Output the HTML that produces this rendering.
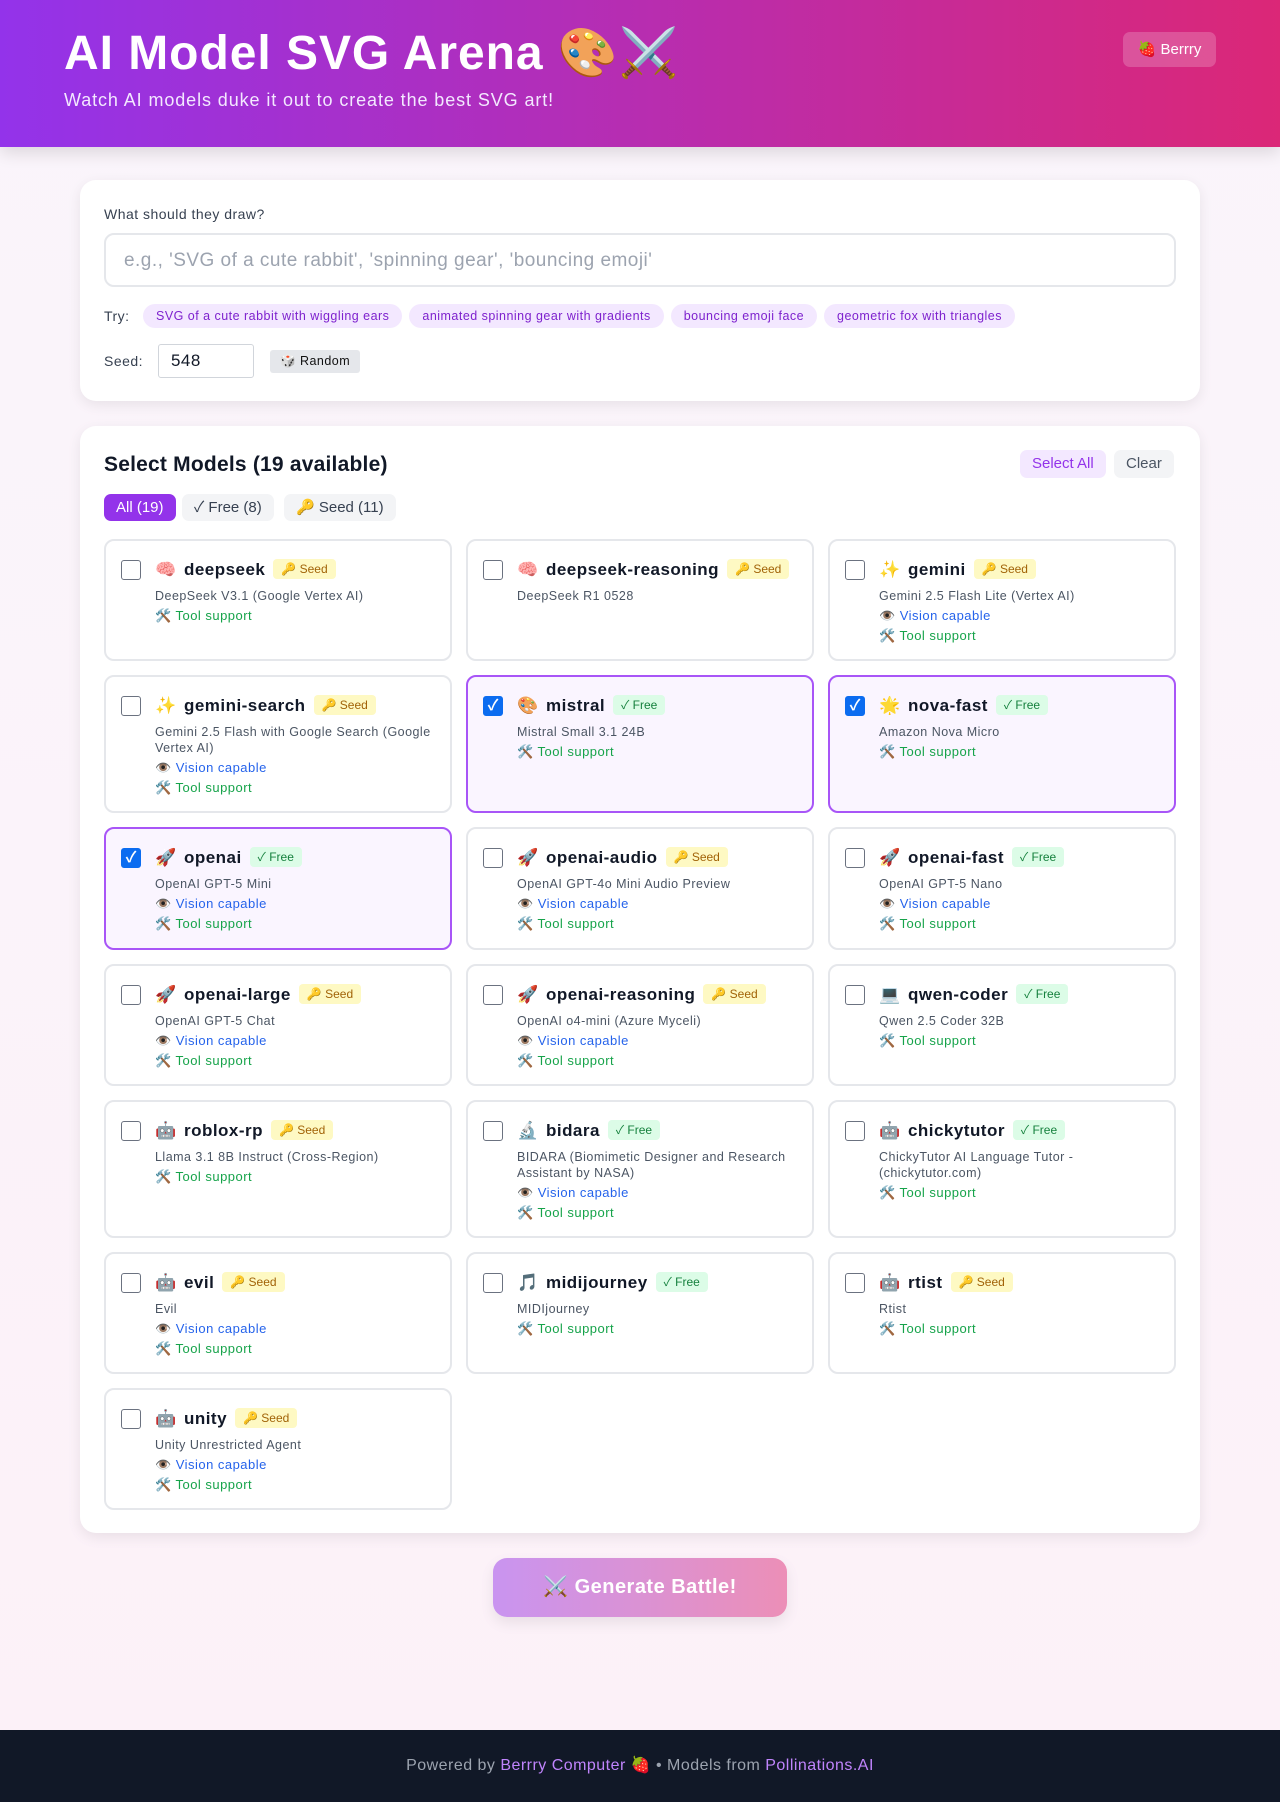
<!DOCTYPE html>
<html><head><meta charset="utf-8"><style>
*{box-sizing:border-box;margin:0;padding:0}
body{width:1280px;height:1802px;font-family:"Liberation Sans","Noto Sans CJK SC",sans-serif;background:linear-gradient(180deg,#faf5fb,#fcf1f8);position:relative;overflow:hidden;color:#111827;letter-spacing:.03em}
.hdr{position:absolute;left:0;top:0;width:1280px;height:147px;background:linear-gradient(90deg,#9333ea,#db2777);box-shadow:0 6px 16px rgba(0,0,0,.12)}
.hdr h1{position:absolute;left:64px;top:24px;font-size:48px;color:#fff;font-weight:bold;letter-spacing:.02em}
.hdr p{position:absolute;left:64px;top:90px;font-size:18px;color:#f3e8ff;letter-spacing:.05em}
.berry{position:absolute;left:1123px;top:32px;width:93px;height:35px;border-radius:7px;background:rgba(255,255,255,.2);color:#fff;font-size:15px;text-align:center;line-height:35px;letter-spacing:0}
.card{position:absolute;left:80px;width:1120px;background:#fff;border-radius:16px;box-shadow:0 4px 14px rgba(0,0,0,.08)}
.lbl{position:absolute;left:24px;font-size:14px;color:#374151}
.inp{position:absolute;left:24px;top:53px;width:1072px;height:54px;border:2px solid #e5e7eb;border-radius:10px;font-size:19px;color:#9ca3af;padding:15px 18px}
.chip{display:inline-block;background:#f3e8ff;color:#7e22ce;font-size:12.5px;border-radius:12px;padding:5px 13px;margin-right:7px}
.seed{position:absolute;left:78px;top:164px;width:96px;height:34px;border:1px solid #d1d5db;border-radius:3px;font-size:17px;padding:6px 12px}
.rnd{position:absolute;left:190px;top:170px;background:#e5e7eb;font-size:12.5px;padding:4px 10px;border-radius:3px;color:#111}
.h2{position:absolute;left:24px;top:27px;font-size:21px;font-weight:bold;letter-spacing:.01em}
.pill{position:absolute;top:68px;height:27px;line-height:27px;border-radius:7px;font-size:15px;padding:0 12px;background:#f3f4f6;color:#374151;letter-spacing:0}
.btn{position:absolute;top:24px;height:28px;line-height:28px;border-radius:7px;font-size:15px;padding:0 12px;letter-spacing:0}
.grid{position:absolute;left:24px;top:113px;width:1072px;display:grid;grid-template-columns:348px 348px 348px;column-gap:14px;grid-template-rows:122px 138px 123px 122px 138px 122px 122px;row-gap:14px}
.m{border:2px solid #e5e7eb;border-radius:10px;position:relative;padding:17px 14px 0 49px}
.m.sel{border-color:#a855f7;background:#faf5ff}
.cb{position:absolute;left:15px;top:19px;width:20px;height:20px;border:1.5px solid #6b7280;border-radius:3px;background:#fff;letter-spacing:0}
.sel .cb{background:#0b6cf0;border-color:#0b6cf0;color:#fff;font-size:15px;text-align:center;line-height:18px;font-weight:bold}
.nm{font-size:17px;font-weight:bold;height:24px;line-height:24px;white-space:nowrap}
.nm .ic{display:inline-block;width:22px;font-weight:normal;font-size:17px;margin-right:7px}
.tag{display:inline-block;font-size:12px;font-weight:normal;padding:0 8px;line-height:20px;border-radius:4px;margin-left:8px;vertical-align:2px;letter-spacing:0}
.s{background:#fef9c3;color:#a16207}.f{background:#dcfce7;color:#15803d}
.d{font-size:12.5px;color:#4b5563;margin-top:6px;line-height:16px}
.v{font-size:13px;color:#2563eb;margin-top:4px;line-height:16px}
.t{font-size:13px;color:#16a34a;margin-top:4px;line-height:16px}
.gen{position:absolute;left:493px;top:1558px;width:294px;height:59px;border-radius:14px;background:linear-gradient(90deg,#c994f0,#ec8fb7);color:#fff;font-weight:bold;font-size:20px;text-align:center;line-height:59px;box-shadow:0 6px 14px rgba(0,0,0,.08)}
.ft{position:absolute;left:0;top:1730px;width:1280px;height:72px;background:#111827;color:#9ca3af;font-size:16px;text-align:center;line-height:72px}
.ft b{font-weight:normal;color:#c084fc}
</style></head><body>
<div class="hdr"><h1>AI Model SVG Arena 🎨⚔️</h1><p>Watch AI models duke it out to create the best SVG art!</p><div class="berry">🍓 Berrry</div></div>

<div class="card" style="top:180px;height:221px">
<div class="lbl" style="top:26px">What should they draw?</div>
<div class="inp">e.g., 'SVG of a cute rabbit', 'spinning gear', 'bouncing emoji'</div>
<div class="lbl" style="top:128px">Try:</div>
<div style="position:absolute;left:63px;top:124px"><span class="chip">SVG of a cute rabbit with wiggling ears</span><span class="chip">animated spinning gear with gradients</span><span class="chip">bouncing emoji face</span><span class="chip">geometric fox with triangles</span></div>
<div class="lbl" style="top:173px">Seed:</div>
<div class="seed">548</div>
<div class="rnd">🎲 Random</div>
</div>

<div class="card" style="top:426px;height:1107px">
<div class="h2">Select Models (19 available)</div>
<div class="btn" style="left:940px;background:#f3e8ff;color:#9333ea">Select All</div>
<div class="btn" style="left:1034px;background:#f3f4f6;color:#4b5563">Clear</div>
<div class="pill" style="left:24px;background:#9333ea;color:#fff">All (19)</div>
<div class="pill" style="left:102px">✓ Free (8)</div>
<div class="pill" style="left:204px">🔑 Seed (11)</div>
<div class="grid">
<div class="m"><div class="cb"></div><div class="nm"><span class="ic">🧠</span>deepseek<span class="tag s">🔑 Seed</span></div><div class="d">DeepSeek V3.1 (Google Vertex AI)</div><div class="t">🛠️ Tool support</div></div>
<div class="m"><div class="cb"></div><div class="nm"><span class="ic">🧠</span>deepseek-reasoning<span class="tag s">🔑 Seed</span></div><div class="d">DeepSeek R1 0528</div></div>
<div class="m"><div class="cb"></div><div class="nm"><span class="ic">✨</span>gemini<span class="tag s">🔑 Seed</span></div><div class="d">Gemini 2.5 Flash Lite (Vertex AI)</div><div class="v">👁️ Vision capable</div><div class="t">🛠️ Tool support</div></div>
<div class="m"><div class="cb"></div><div class="nm"><span class="ic">✨</span>gemini-search<span class="tag s">🔑 Seed</span></div><div class="d">Gemini 2.5 Flash with Google Search (Google Vertex AI)</div><div class="v">👁️ Vision capable</div><div class="t">🛠️ Tool support</div></div>
<div class="m sel"><div class="cb">✓</div><div class="nm"><span class="ic">🎨</span>mistral<span class="tag f">✓ Free</span></div><div class="d">Mistral Small 3.1 24B</div><div class="t">🛠️ Tool support</div></div>
<div class="m sel"><div class="cb">✓</div><div class="nm"><span class="ic">🌟</span>nova-fast<span class="tag f">✓ Free</span></div><div class="d">Amazon Nova Micro</div><div class="t">🛠️ Tool support</div></div>
<div class="m sel"><div class="cb">✓</div><div class="nm"><span class="ic">🚀</span>openai<span class="tag f">✓ Free</span></div><div class="d">OpenAI GPT-5 Mini</div><div class="v">👁️ Vision capable</div><div class="t">🛠️ Tool support</div></div>
<div class="m"><div class="cb"></div><div class="nm"><span class="ic">🚀</span>openai-audio<span class="tag s">🔑 Seed</span></div><div class="d">OpenAI GPT-4o Mini Audio Preview</div><div class="v">👁️ Vision capable</div><div class="t">🛠️ Tool support</div></div>
<div class="m"><div class="cb"></div><div class="nm"><span class="ic">🚀</span>openai-fast<span class="tag f">✓ Free</span></div><div class="d">OpenAI GPT-5 Nano</div><div class="v">👁️ Vision capable</div><div class="t">🛠️ Tool support</div></div>
<div class="m"><div class="cb"></div><div class="nm"><span class="ic">🚀</span>openai-large<span class="tag s">🔑 Seed</span></div><div class="d">OpenAI GPT-5 Chat</div><div class="v">👁️ Vision capable</div><div class="t">🛠️ Tool support</div></div>
<div class="m"><div class="cb"></div><div class="nm"><span class="ic">🚀</span>openai-reasoning<span class="tag s">🔑 Seed</span></div><div class="d">OpenAI o4-mini (Azure Myceli)</div><div class="v">👁️ Vision capable</div><div class="t">🛠️ Tool support</div></div>
<div class="m"><div class="cb"></div><div class="nm"><span class="ic">💻</span>qwen-coder<span class="tag f">✓ Free</span></div><div class="d">Qwen 2.5 Coder 32B</div><div class="t">🛠️ Tool support</div></div>
<div class="m"><div class="cb"></div><div class="nm"><span class="ic">🤖</span>roblox-rp<span class="tag s">🔑 Seed</span></div><div class="d">Llama 3.1 8B Instruct (Cross-Region)</div><div class="t">🛠️ Tool support</div></div>
<div class="m"><div class="cb"></div><div class="nm"><span class="ic">🔬</span>bidara<span class="tag f">✓ Free</span></div><div class="d">BIDARA (Biomimetic Designer and Research Assistant by NASA)</div><div class="v">👁️ Vision capable</div><div class="t">🛠️ Tool support</div></div>
<div class="m"><div class="cb"></div><div class="nm"><span class="ic">🤖</span>chickytutor<span class="tag f">✓ Free</span></div><div class="d">ChickyTutor AI Language Tutor - (chickytutor.com)</div><div class="t">🛠️ Tool support</div></div>
<div class="m"><div class="cb"></div><div class="nm"><span class="ic">🤖</span>evil<span class="tag s">🔑 Seed</span></div><div class="d">Evil</div><div class="v">👁️ Vision capable</div><div class="t">🛠️ Tool support</div></div>
<div class="m"><div class="cb"></div><div class="nm"><span class="ic">🎵</span>midijourney<span class="tag f">✓ Free</span></div><div class="d">MIDIjourney</div><div class="t">🛠️ Tool support</div></div>
<div class="m"><div class="cb"></div><div class="nm"><span class="ic">🤖</span>rtist<span class="tag s">🔑 Seed</span></div><div class="d">Rtist</div><div class="t">🛠️ Tool support</div></div>
<div class="m"><div class="cb"></div><div class="nm"><span class="ic">🤖</span>unity<span class="tag s">🔑 Seed</span></div><div class="d">Unity Unrestricted Agent</div><div class="v">👁️ Vision capable</div><div class="t">🛠️ Tool support</div></div>
</div>
</div>

<div class="gen">⚔️ Generate Battle!</div>
<div class="ft">Powered by <b>Berrry Computer</b> 🍓 • Models from <b>Pollinations.AI</b></div>
</body></html>
